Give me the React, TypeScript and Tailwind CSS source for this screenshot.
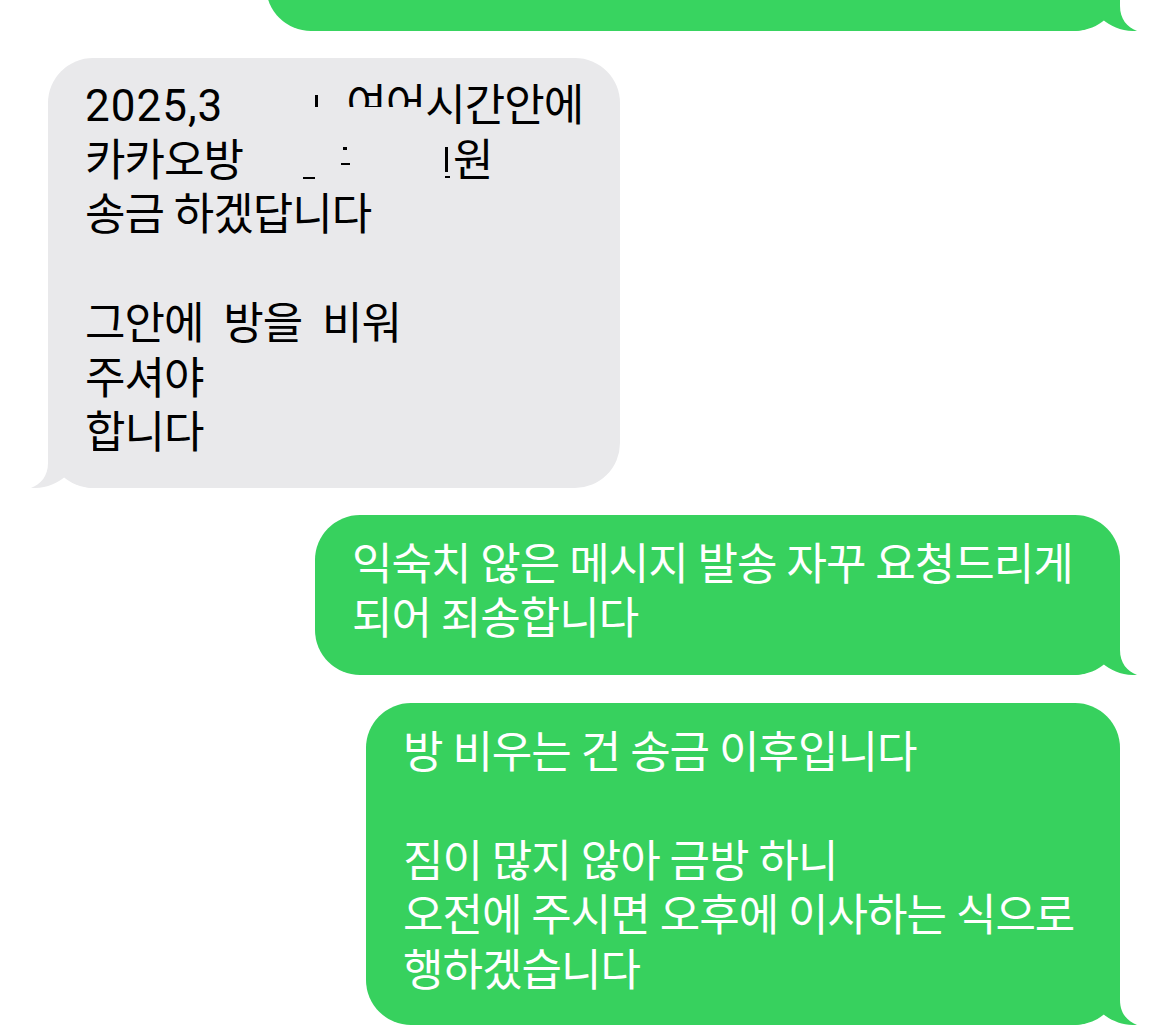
import React from "react";

const GREEN = "#37d15e";

function Tail({ left, fill }: { left?: boolean; fill: string }) {
  return (
    <svg
      className={
        "absolute bottom-0 w-[62px] h-[45px] " +
        (left ? "left-[-17px]" : "right-[-17px]")
      }
      viewBox="0 0 62 45"
    >
      <g transform={left ? "translate(62 0) scale(-1 1)" : undefined}>
        <path
          d="M0 0H45V20C45 33 52 41 62 45C48 45.5 36 41 27 33C19 40 10 45 0 45Z"
          fill={fill}
        />
      </g>
    </svg>
  );
}

function Mark({ w, h, mt, ml }: { w: string; h: string; mt: string; ml: string }) {
  return <span className={`inline-block align-top bg-black ${w} ${h} ${mt} ${ml}`} />;
}

export default function App() {
  return (
    <div className="w-[1170px] min-h-[1035px] bg-white overflow-hidden flex flex-col font-[Roboto,'Noto_Sans_CJK_KR',sans-serif] text-[44px] leading-[54.5px] tracking-[-1px]">
      {/* top (cut) bubble */}
      <div className="relative self-end mr-[50px] mt-[-89px] w-[854px] h-[120px] rounded-[45px] bg-[#38d460]">
        <Tail fill="#38d460" />
      </div>

      {/* gray incoming bubble */}
      <div className="relative ml-[48px] mt-[27px] w-[572px] rounded-[45px] bg-[#e9e9eb] pl-[37px] pt-[21px] pb-[27px] text-black whitespace-pre">
        <div className="whitespace-nowrap">
          <span className="tracking-[1px]">2025,3</span>
          <span className="inline-block w-[92px]" />
          <Mark w="w-[3px]" h="h-[12px]" mt="mt-[16px]" ml="ml-0" />
          <span className="inline-block w-[28px]" />
          <span className="inline-block align-top h-[28px] overflow-hidden">여어</span>
          <span>시간안에</span>
        </div>
        <div className="whitespace-nowrap">
          <span>카카오방</span>
          <Mark w="w-[12px]" h="h-[2px]" mt="mt-[43px]" ml="ml-[60px]" />
          <Mark w="w-[4px]" h="h-[3px]" mt="mt-[13px]" ml="ml-[28px]" />
          <Mark w="w-[9px]" h="h-[2px]" mt="mt-[29px]" ml="ml-[-6px]" />
          <Mark w="w-[3px]" h="h-[25px]" mt="mt-[13px]" ml="ml-[95px]" />
          <Mark w="w-[5px]" h="h-[2px]" mt="mt-[42px]" ml="ml-[-3px]" />
          <span className="inline-block w-[3px]" />
          <span>원</span>
        </div>
        <div>송금 하겠답니다</div>
        <div>&nbsp;</div>
        <div>그안에  방을  비워</div>
        <div>주셔야</div>
        <div>합니다</div>
        <Tail left fill="#e9e9eb" />
      </div>

      {/* green outgoing 1 */}
      <div className="relative self-end mr-[50px] mt-[27px] w-[805px] rounded-[45px] bg-[#37d15e] pl-[37px] pt-[23px] pb-[28px] text-white">
        <div>익숙치 않은 메시지 발송 자꾸 요청드리게</div>
        <div>되어 죄송합니다</div>
        <Tail fill={GREEN} />
      </div>

      {/* green outgoing 2 */}
      <div className="relative self-end mr-[50px] mt-[28px] w-[754px] rounded-[45px] bg-[#37d15e] pl-[37px] pt-[23px] pb-[27px] text-white">
        <div>방 비우는 건 송금 이후입니다</div>
        <div>&nbsp;</div>
        <div>짐이 많지 않아 금방 하니</div>
        <div>오전에 주시면 오후에 이사하는 식으로</div>
        <div>행하겠습니다</div>
        <Tail fill={GREEN} />
      </div>
    </div>
  );
}
